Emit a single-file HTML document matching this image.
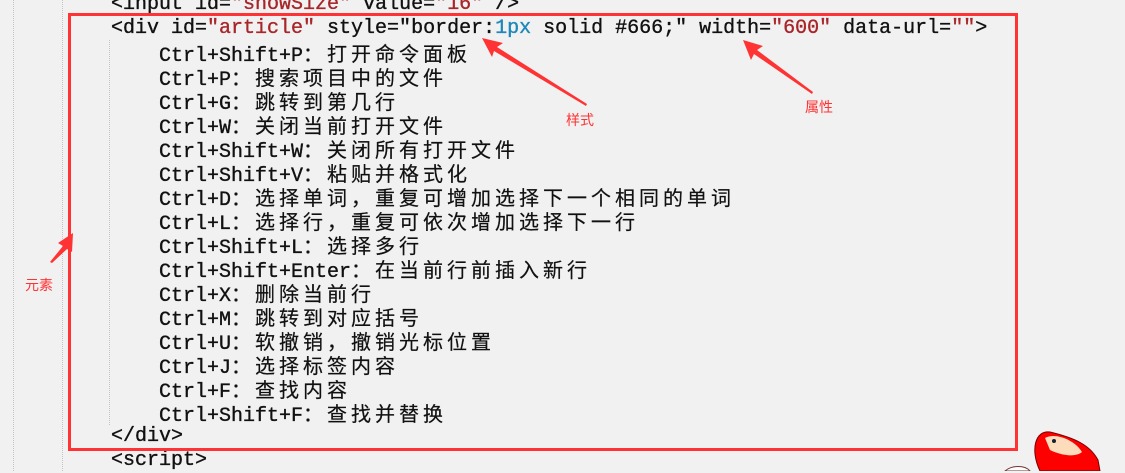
<!DOCTYPE html>
<html><head><meta charset="utf-8"><style>
html,body{margin:0;padding:0;width:1125px;height:471px;overflow:hidden;background:#f1f1f1;}
.g{position:absolute;top:0;height:471px;border-left:1px dotted #c4c4c4;}
.code{position:absolute;left:111px;top:-7px;font-family:"Liberation Mono","Noto Sans CJK SC",monospace;font-size:20px;color:#111;-webkit-text-stroke:0.35px #111;}
.code div{height:24px;line-height:24px;white-space:pre;}
.s{color:#a8262a;-webkit-text-stroke:0.35px #a8262a}.n{color:#1e88b8;-webkit-text-stroke:0.35px #1e88b8}
.c{font-family:"Noto Sans CJK SC",sans-serif;font-size:20px;letter-spacing:4px;line-height:24px;-webkit-text-stroke:0.2px #111;}
.lbl{position:absolute;color:#f33;font-family:"Noto Sans CJK SC",sans-serif;font-size:14px;}
</style></head><body>
<div class="g" style="left:13px"></div>
<div class="g" style="left:62px"></div>
<div class="g" style="left:109px;top:40px;height:385px"></div>
<div class="code"><div>&lt;input id=<span class="s">"showSize"</span> value=<span class="s">"16"</span> /&gt;</div><div>&lt;div id=<span class="s">"article"</span> style="border:<span class="n">1px</span> solid #666;" width=<span class="s">"600"</span> data-url=<span class="s">""</span>&gt;</div><div>    Ctrl+Shift+P<span class="c">：打开命令面板</span></div><div>    Ctrl+P<span class="c">：搜索项目中的文件</span></div><div>    Ctrl+G<span class="c">：跳转到第几行</span></div><div>    Ctrl+W<span class="c">：关闭当前打开文件</span></div><div>    Ctrl+Shift+W<span class="c">：关闭所有打开文件</span></div><div>    Ctrl+Shift+V<span class="c">：粘贴并格式化</span></div><div>    Ctrl+D<span class="c">：选择单词，重复可增加选择下一个相同的单词</span></div><div>    Ctrl+L<span class="c">：选择行，重复可依次增加选择下一行</span></div><div>    Ctrl+Shift+L<span class="c">：选择多行</span></div><div>    Ctrl+Shift+Enter<span class="c">：在当前行前插入新行</span></div><div>    Ctrl+X<span class="c">：删除当前行</span></div><div>    Ctrl+M<span class="c">：跳转到对应括号</span></div><div>    Ctrl+U<span class="c">：软撤销，撤销光标位置</span></div><div>    Ctrl+J<span class="c">：选择标签内容</span></div><div>    Ctrl+F<span class="c">：查找内容</span></div><div>    Ctrl+Shift+F<span class="c">：查找并替换</span></div><div>&lt;/div&gt;</div><div>&lt;script&gt;</div></div>
<div style="position:absolute;left:68px;top:13px;width:944px;height:432px;border:3px solid #f33;"></div>
<svg width="1125" height="471" style="position:absolute;left:0;top:0">
<g fill="#f33">
<polygon points="482,38 503,43 497,47 587,104 586,106 494,51 492,57"/>
<polygon points="743,40 763,46 757,50 813,92 812,94 754,54 751,60"/>
<polygon points="73,233 72,252 67,249 52,263 50,262 63,246 58,243"/>
</g>
<g>
<path d="M1040 471 C1030 450 1035 430 1050 432 C1075 438 1090 445 1098 460 L1100 471Z" fill="#f00" stroke="#700" stroke-width="1"/>
<path d="M1045 438 C1055 432 1075 440 1082 452 C1075 458 1060 455 1050 450Z" fill="#fddcbc"/>
<circle cx="1054" cy="441" r="2" fill="#123"/>
<path d="M1005 471 C1012 465 1025 465 1030 471Z" fill="#fff" stroke="#733"/>
</g>
</svg>
<div class="lbl" style="left:566px;top:110px">样式</div>
<div class="lbl" style="left:805px;top:97px">属性</div>
<div class="lbl" style="left:25px;top:275px">元素</div>
</body></html>
